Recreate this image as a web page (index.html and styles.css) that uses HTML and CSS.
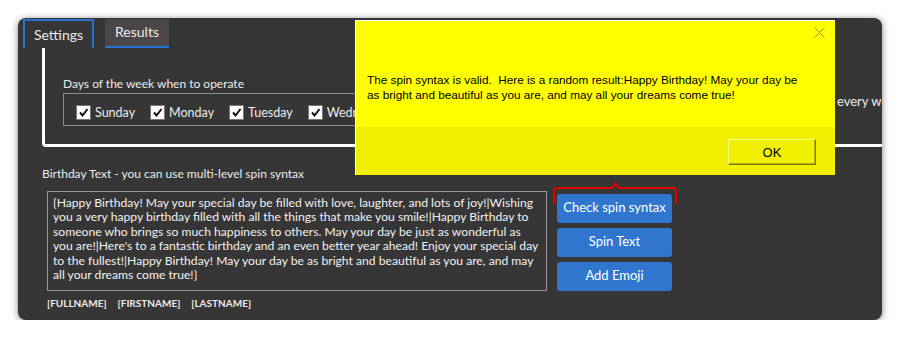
FILE: index.html
```html
<!DOCTYPE html>
<html lang="en">
<head>
    <meta charset="UTF-8">
    <title>Birthday Settings</title>
    <link rel="stylesheet" href="styles.css">
</head>
<body>
    <div class="window">
        <div class="tabs">
            <div class="tab tab-active">Settings</div>
            <div class="tab tab-other">Results</div>
        </div>

        <div class="group">
            <div class="days">
                <div class="days-label">Days of the week when to operate</div>
                <div class="days-box">
                    <label class="day"><span class="check"><svg width="13" height="13" viewBox="0 0 13 13"><path d="M3 6.5 L5.5 9.5 L10.5 3" fill="none" stroke="#111" stroke-width="2"/></svg></span>Sunday</label>
                    <label class="day"><span class="check"><svg width="13" height="13" viewBox="0 0 13 13"><path d="M3 6.5 L5.5 9.5 L10.5 3" fill="none" stroke="#111" stroke-width="2"/></svg></span>Monday</label>
                    <label class="day"><span class="check"><svg width="13" height="13" viewBox="0 0 13 13"><path d="M3 6.5 L5.5 9.5 L10.5 3" fill="none" stroke="#111" stroke-width="2"/></svg></span>Tuesday</label>
                    <label class="day"><span class="check"><svg width="13" height="13" viewBox="0 0 13 13"><path d="M3 6.5 L5.5 9.5 L10.5 3" fill="none" stroke="#111" stroke-width="2"/></svg></span>Wednesday</label>
                </div>
            </div>
            <div class="extra">every week</div>
        </div>

        <div class="text-label">Birthday Text - you can use multi-level spin syntax</div>
        <div class="text-row">
            <div class="textbox">{Happy Birthday! May your special day be filled with love, laughter, and lots of joy!|Wishing<br>you a very happy birthday filled with all the things that make you smile!|Happy Birthday to<br>someone who brings so much happiness to others. May your day be just as wonderful as<br>you are!|Here's to a fantastic birthday and an even better year ahead! Enjoy your special day<br>to the fullest!|Happy Birthday! May your day be as bright and beautiful as you are, and may<br>all your dreams come true!}</div>
            <div class="actions">
                <button class="btn">Check spin syntax</button>
                <button class="btn">Spin Text</button>
                <button class="btn">Add Emoji</button>
            </div>
        </div>
        <div class="tags">
            <span>[FULLNAME]</span>
            <span>[FIRSTNAME]</span>
            <span>[LASTNAME]</span>
        </div>
    </div>

    <!-- highlight around the check button -->
    <svg class="bracket" width="128" height="26" viewBox="0 0 128 26">
        <path d="M2 23 V11 Q2 7 6 7 H58 Q62 7 63.5 2 Q65 7 69 7 H120 Q124 7 124 11 V23" fill="none" stroke="#e00000" stroke-width="2"/>
    </svg>

    <div class="dialog">
        <svg class="dialog-close" width="11" height="11" viewBox="0 0 11 11">
            <path d="M0.5 0.5 L10.5 10.5 M10.5 0.5 L0.5 10.5" stroke="#9a9a20" stroke-width="1"/>
        </svg>
        <div class="dialog-body">
            The spin syntax is valid.&nbsp; Here is a random result:Happy Birthday! May your day be<br>as bright and beautiful as you are, and may all your dreams come true!
        </div>
        <div class="dialog-footer">
            <button class="ok-btn">OK</button>
        </div>
    </div>
</body>
</html>
```

FILE: styles.css
```css
body {
    margin: 0;
    background-color: #fff;
    font-family: Lato, "Noto Sans", sans-serif;
    color: #ececec;
}
.window {
    position: relative;
    margin: 18px 18px 0 18px;
    width: 864px;
    height: 302px;
    background-color: #363636;
    border-radius: 8px;
    box-shadow: 0 1px 7px rgba(0, 0, 0, 0.5);
    overflow: hidden;
}
.tabs {
    display: flex;
    gap: 11px;
    padding: 1px 0 0 5px;
    height: 29px;
}
.tab {
    box-sizing: border-box;
    height: 29px;
    font-size: 14px;
    display: flex;
    justify-content: center;
}
.tab-active {
    width: 71px;
    border: 2px solid #2a72d2;
    border-bottom: none;
    padding-top: 5px;
}
.tab-other {
    width: 64px;
    background-color: #4b4748;
    border-bottom: 2px solid #2a72d2;
    padding-top: 4px;
}
.group {
    display: flex;
    margin-left: 24px;
    height: 96px;
    border-left: 3px solid #fff;
    border-bottom: 3px solid #fff;
    border-bottom-left-radius: 4px;
}
.days {
    flex-shrink: 0;
    padding: 29px 0 0 18px;
    width: 760px;
}
.days-label {
    font-size: 12px;
    line-height: 14px;
}
.days-box {
    box-sizing: border-box;
    height: 33px;
    margin-top: 2px;
    border: 1px solid #8c8c8c;
    border-right: none;
    display: flex;
    align-items: center;
    gap: 16px;
    padding: 6px 0 0 13px;
}
.day {
    display: flex;
    align-items: center;
    gap: 5px;
    font-size: 12.5px;
}
.check {
    width: 13px;
    height: 13px;
    background-color: #fff;
    box-sizing: border-box;
    outline: 1px solid #777;
    display: block;
}
.check svg {
    display: block;
}
.extra {
    flex-shrink: 0;
    margin-left: 14px;
    padding-top: 45px;
    font-size: 13px;
    white-space: nowrap;
}
.text-label {
    margin: 20px 0 0 24px;
    font-size: 12px;
    line-height: 14px;
}
.text-row {
    display: flex;
    gap: 10px;
    margin: 10px 0 0 29px;
}
.textbox {
    box-sizing: border-box;
    width: 500px;
    height: 100px;
    border: 1px solid #9a9a9a;
    padding: 4px 0 0 5px;
    font-size: 12.15px;
    line-height: 14.4px;
    white-space: nowrap;
    color: #f2f2f2;
}
.actions {
    display: flex;
    flex-direction: column;
    gap: 5px;
    padding-top: 3px;
}
.btn {
    width: 115px;
    height: 29px;
    border: none;
    border-radius: 3px;
    background-color: #3076cf;
    color: #fff;
    font-family: Lato, "Noto Sans", sans-serif;
    font-size: 13px;
    padding: 0 0 3px 0;
}
.tags {
    display: flex;
    gap: 11px;
    margin: 6px 0 0 29px;
    font-size: 10px;
    font-weight: bold;
}
.bracket {
    position: absolute;
    left: 552px;
    top: 181px;
}
.dialog {
    position: absolute;
    left: 355px;
    top: 20px;
    width: 480px;
    height: 155px;
    box-sizing: border-box;
    border-top: 1px solid #fff;
    border-left: 1px solid #fff;
    background-color: #ffff00;
    color: #000;
    font-family: "Liberation Sans", sans-serif;
    display: flex;
    flex-direction: column;
}
.dialog-close {
    position: absolute;
    right: 10px;
    top: 6px;
}
.dialog-body {
    height: 106px;
    box-sizing: border-box;
    padding: 51px 0 0 11px;
    font-size: 11.75px;
    line-height: 15px;
}
.dialog-footer {
    flex: 1;
    background-color: #f0f000;
    display: flex;
    justify-content: flex-end;
    align-items: flex-start;
    padding: 12px 19px 0 0;
}
.ok-btn {
    width: 88px;
    height: 26px;
    background-color: #f0f000;
    border: 1px solid;
    border-color: #fbfb80 #7a7a00 #7a7a00 #fbfb80;
    box-shadow: inset -1px -1px 0 #b0b000;
    font-family: "Liberation Sans", sans-serif;
    font-size: 13px;
    color: #000;
}
```
